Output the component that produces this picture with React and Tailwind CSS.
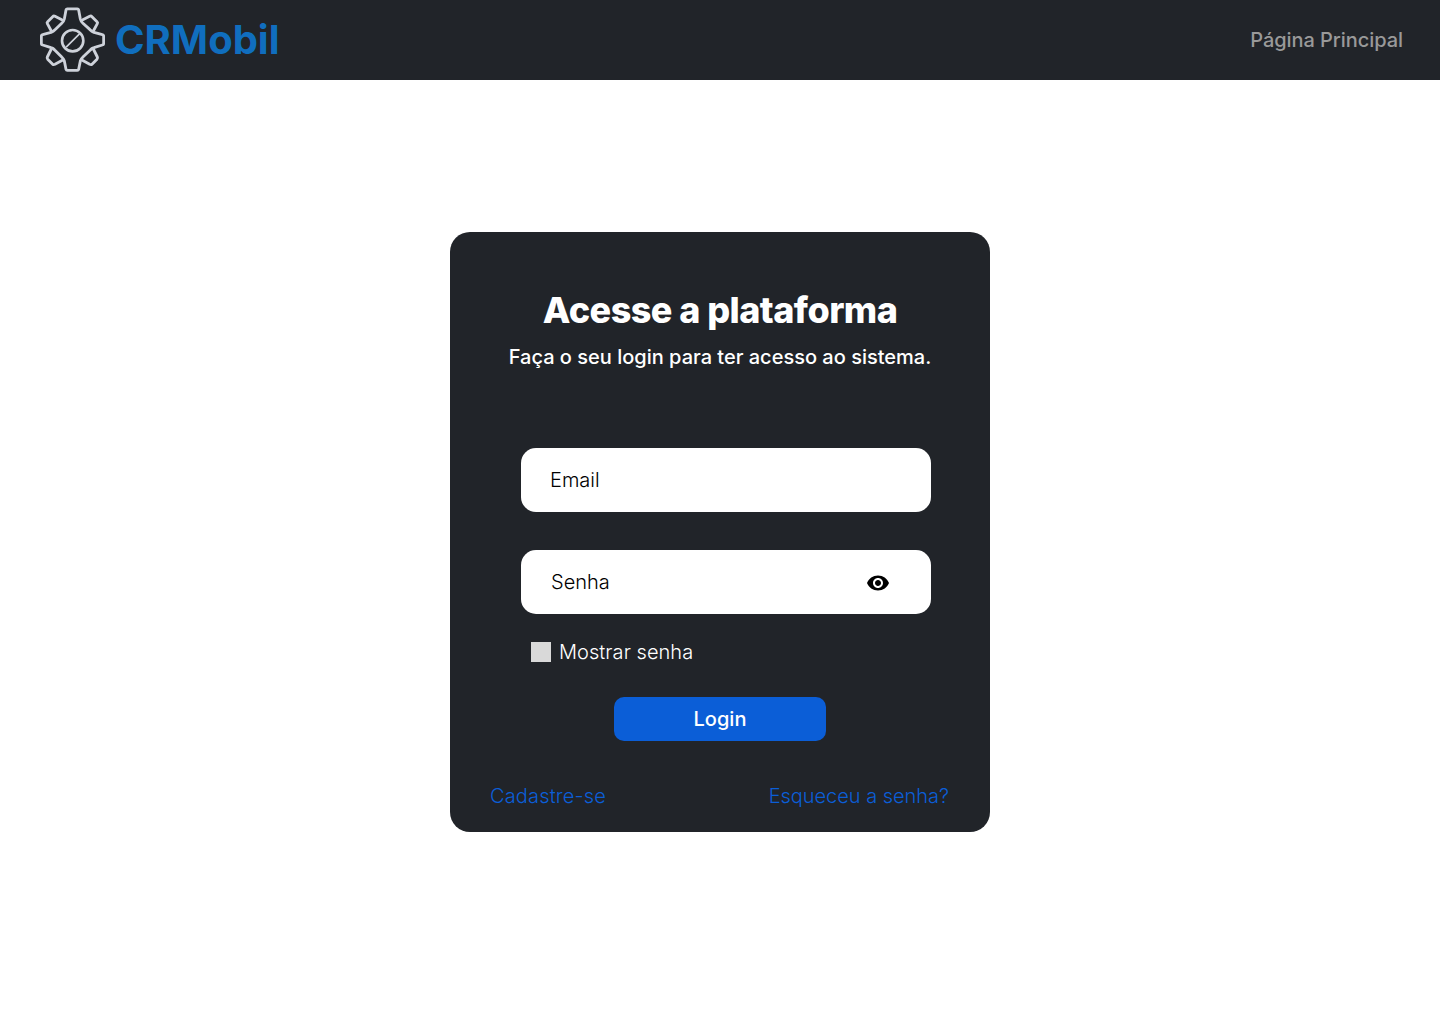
function GearLogo() {
  return (
    <svg className="-mt-px size-[65px] shrink-0" viewBox="30 20 195 195" fill="none" stroke="#ced2da" strokeWidth="8.5" strokeLinejoin="round" strokeLinecap="round">
      <path d="M112 25.500H142Q145 25.500 146 29L151 56Q153 64 158 68L180 88Q185 93 192 96L217 103Q221 104 221 108V129Q221 133 217 134L192 142Q185 144 181 149L158 171Q153 175 151 182L146 207Q145 210 142 210H112Q109 210 108 207L103 182Q101 175 96 171L74 149Q70 144 63 142L38 134Q34 133 34 129V108Q34 104 38 103L63 96Q70 93 75 88L96 68Q101 64 103 56L108 29Q109 25.500 112 25.500Z" />
      <path d="M157 59L179 48Q183 46 186 49L201 64Q204 67 202 70L190 92M190 146L202 170Q204 174 201 177L186 192Q183 194 179 192L157 180M97 180L75 192Q71 194 68 192L53 177Q50 174 52 170L64 146M64 92L52 70Q50 67 53 64L68 49Q71 46 75 48L97 59" />
      <circle cx="128" cy="121" r="32" strokeWidth="8" />
      <path d="M110 139L150 99" strokeWidth="5" />
    </svg>
  );
}

function EyeIcon() {
  return (
    <svg className="size-6" viewBox="0 0 24 24" fill="#000">
      <path d="M12 4.5C7 4.5 2.73 7.61 1 12c1.73 4.39 6 7.5 11 7.5s9.27-3.11 11-7.5c-1.73-4.39-6-7.5-11-7.5zM12 17c-2.76 0-5-2.24-5-5s2.24-5 5-5 5 2.24 5 5-2.24 5-5 5zm0-8c-1.66 0-3 1.34-3 3s1.34 3 3 3 3-1.34 3-3-1.34-3-3-3z" />
    </svg>
  );
}

export default function App() {
  return (
    <div className="flex h-screen flex-col overflow-hidden bg-white font-['Inter',sans-serif] text-xl leading-6 antialiased">
      <header className="flex h-20 shrink-0 items-center justify-between bg-[#212429] pr-[37px] pl-10">
        <div className="flex items-center">
          <GearLogo />
          <span className="ml-2.5 text-[40px] leading-12 font-bold text-[#106ebe]">CRMobil</span>
        </div>
        <a className="font-medium tracking-[-0.06px] whitespace-nowrap text-[#999999]">Página Principal</a>
      </header>

      <main className="flex flex-col items-center pt-[152px]">
        <section className="flex h-[600px] w-[540px] flex-col rounded-[20px] bg-[#212429] pt-14">
          <h1 className="text-center text-4xl leading-[44px] font-extrabold tracking-[-0.55px] text-white">Acesse a plataforma</h1>
          <p className="mt-[13px] text-center font-medium whitespace-nowrap text-white">Faça o seu login para ter acesso ao sistema.</p>

          <div className="mt-[79px] ml-[71px] flex h-16 w-[410px] items-center rounded-[15px] bg-white pl-[29px] font-light text-black">
            Email
          </div>
          <div className="mt-[38px] ml-[71px] flex h-16 w-[410px] items-center justify-between rounded-[15px] bg-white pr-[41px] pl-[30px] font-light text-black">
            Senha
            <span className="pt-0.5"><EyeIcon /></span>
          </div>

          <label className="mt-[26px] ml-[81px] flex items-center gap-2 font-light tracking-[0.05px] text-white">
            <span className="size-5 bg-[#d9d9d9]" />
            Mostrar senha
          </label>

          <button className="mt-[33px] h-11 w-[212px] self-center rounded-[10px] bg-[#0b5ed7] font-medium text-white">Login</button>

          <div className="mt-[43px] flex justify-between pr-[41px] pl-10 font-light text-[#0b5ed7]">
            <a className="tracking-[0.15px]">Cadastre-se</a>
            <a className="tracking-[-0.03px]">Esqueceu a senha?</a>
          </div>
        </section>
      </main>
    </div>
  );
}
